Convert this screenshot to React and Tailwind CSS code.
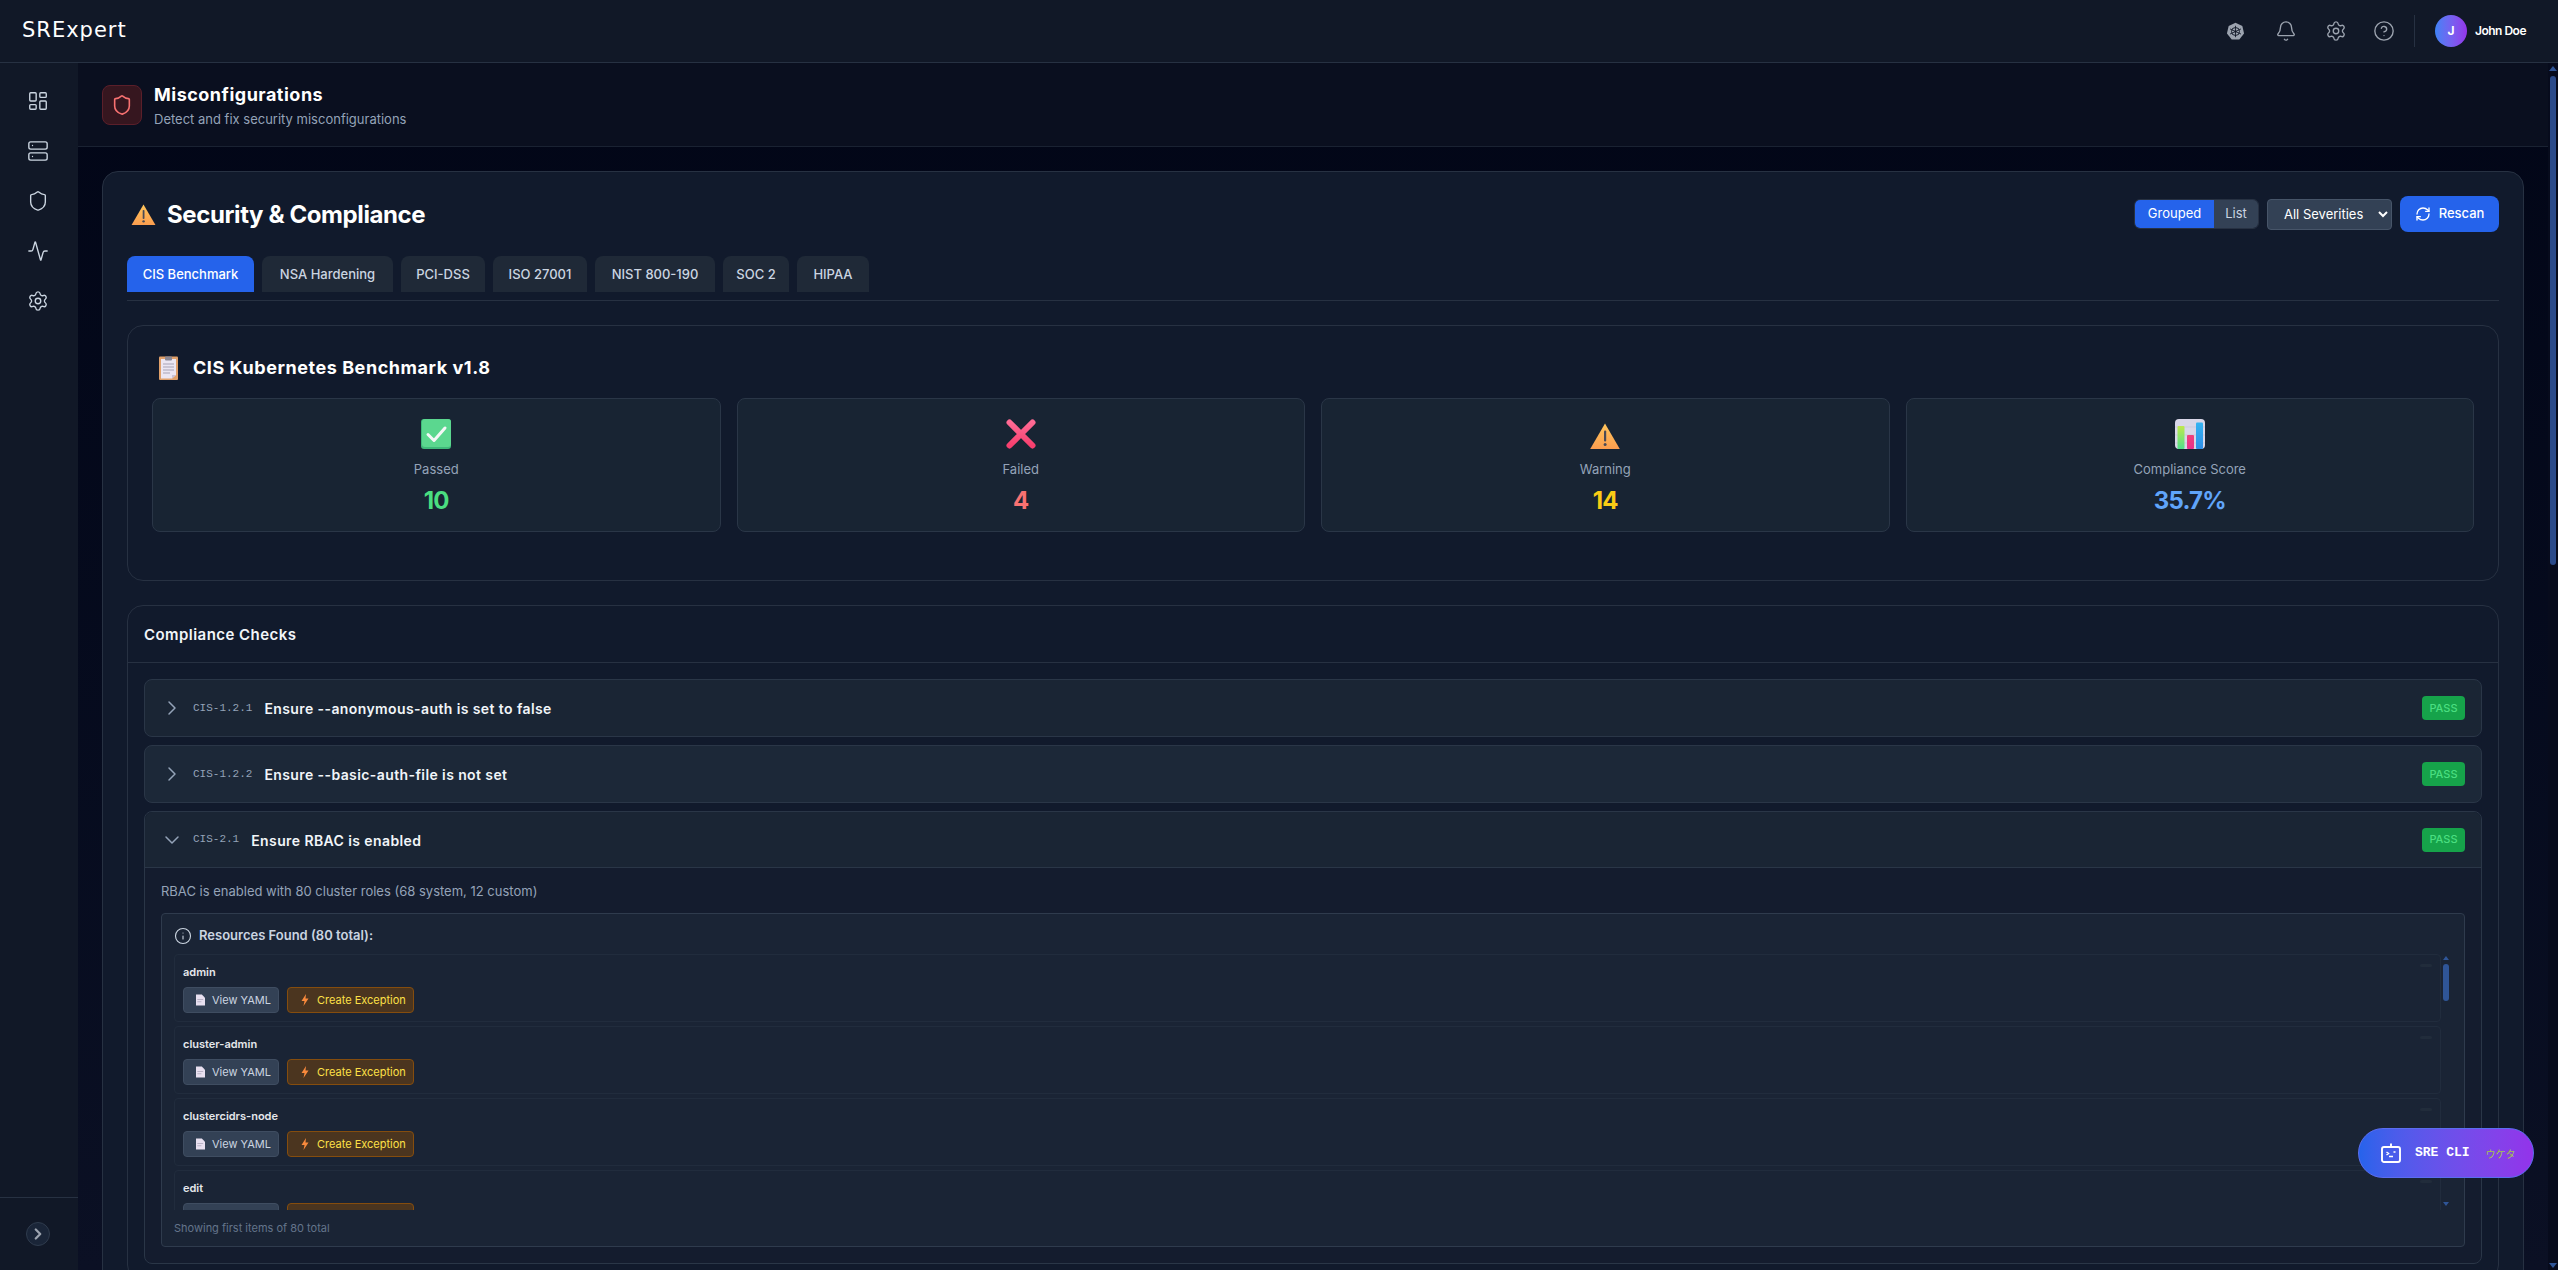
import React from "react";
import { LayoutDashboard, Server, Shield, Activity, Settings, Bell, CircleHelp, ChevronRight, ChevronDown, Info, RefreshCw } from "lucide-react";

const F = "font-['Inter',sans-serif]";

function WarnEmoji({ className, id }) {
  return (
    <svg viewBox="0 0 30 26" className={className}>
      <defs>
        <linearGradient id={id} x1="0" y1="0" x2="0" y2="1"><stop offset="0" stopColor="#ffc65c" /><stop offset="1" stopColor="#fb9d4f" /></linearGradient>
      </defs>
      <path d="M15 0.5 L29.8 26 H0.2 Z" fill={`url(#${id})`} />
      <rect x="14" y="7.5" width="2.2" height="11" rx="1" fill="#4a4a55" />
      <circle cx="15.1" cy="21.5" r="1.5" fill="#4a4a55" />
    </svg>
  );
}

function CheckEmoji({ className }) {
  return (
    <svg viewBox="0 0 30 30" className={className}>
      <rect x="0" y="0" width="30" height="30" rx="3" fill="#3fb97a" />
      <rect x="1" y="0" width="29" height="28" rx="3" fill="#5bd78f" />
      <path d="M7 15.5 L13 21.5 L24 9" fill="none" stroke="#f5f7f7" strokeWidth="3" strokeLinecap="round" strokeLinejoin="round" />
    </svg>
  );
}

function CrossEmoji({ className }) {
  return (
    <svg viewBox="0 0 30 30" className={className}>
      <defs>
        <linearGradient id="cr" x1="0" y1="0" x2="0" y2="1"><stop offset="0" stopColor="#ff6a94" /><stop offset="1" stopColor="#f73f6e" /></linearGradient>
      </defs>
      <path d="M3.5 3.5 L15 15 L26.5 3.5 L15 15 L26.5 26.5 L15 15 L3.5 26.5" stroke="url(#cr)" strokeWidth="6" strokeLinecap="round" strokeLinejoin="round" fill="none" />
    </svg>
  );
}

function ChartEmoji({ className }) {
  return (
    <svg viewBox="0 0 30 30" className={className}>
      <defs>
        <linearGradient id="cg" x1="0" y1="0" x2="0" y2="1"><stop offset="0" stopColor="#c0e84c" /><stop offset="1" stopColor="#4fe08c" /></linearGradient>
        <linearGradient id="cp" x1="0" y1="0" x2="0" y2="1"><stop offset="0" stopColor="#f0407a" /><stop offset="1" stopColor="#e8308c" /></linearGradient>
        <linearGradient id="cb" x1="0" y1="0" x2="0" y2="1"><stop offset="0" stopColor="#35b4f2" /><stop offset="1" stopColor="#2f8ee8" /></linearGradient>
      </defs>
      <rect x="0" y="0" width="30" height="30" rx="4" fill="#d9d7e8" />
      <path d="M0 8 H30 M0 16 H30 M0 24 H30" stroke="#c6c4d8" strokeWidth="0.7" />
      <rect x="2.5" y="7" width="7" height="23" rx="1" fill="url(#cg)" />
      <rect x="12" y="16" width="7" height="14" rx="1" fill="url(#cp)" />
      <rect x="21" y="3.5" width="7" height="26.5" rx="1" fill="url(#cb)" />
    </svg>
  );
}

function ClipboardEmoji({ className }) {
  return (
    <svg viewBox="0 0 19 24" className={className}>
      <rect x="0" y="0.5" width="19" height="23.5" rx="1" fill="#e0a06a" />
      <path d="M2 3 H17 V19 L13 22.5 H2 Z" fill="#ebe6f2" />
      <path d="M13 22.5 L17 19 H13 Z" fill="#c9c2d6" />
      <rect x="6" y="0.5" width="7" height="4" rx="1" fill="#8a8793" />
      <path d="M4 8 H15 M4 11 H15 M4 14 H15 M4 17 H11" stroke="#a8a3b5" strokeWidth="1" />
    </svg>
  );
}

function DocEmoji() {
  return (
    <svg viewBox="0 0 10 12" className="w-[9px] h-[12px] shrink-0">
      <path d="M0 0 H6.5 L10 3.5 V12 H0 Z" fill="#e8e0f0" />
      <path d="M1.5 5.5 H8 M1.5 8 H6" stroke="#b9b2c6" strokeWidth="1.2" />
    </svg>
  );
}

function BoltEmoji() {
  return (
    <svg viewBox="0 0 8 12" className="w-[8px] h-[12px] shrink-0">
      <path d="M5 0 L0.5 7 H3.5 L2.5 12 L7.5 4.6 H4.5 Z" fill="#f98a3c" />
    </svg>
  );
}

function K8sIcon() {
  return (
    <svg viewBox="0 0 20 20" className="w-[19px] h-[19px]">
      <path d="M10 0.8 L17.2 4.2 L19 12 L14 18.4 H6 L1 12 L2.8 4.2 Z" fill="#9ca3af" />
      <circle cx="10" cy="10" r="4.2" fill="none" stroke="#111827" strokeWidth="1" />
      <path d="M10 4 V16 M4.2 7.3 L15.8 12.7 M15.8 7.3 L4.2 12.7" stroke="#111827" strokeWidth="0.9" />
      <circle cx="10" cy="10" r="1.1" fill="#111827" />
    </svg>
  );
}

function BotIcon() {
  return (
    <svg viewBox="0 0 20 20" className="w-[20px] h-[20px]" fill="none" stroke="#fff">
      <rect x="1" y="4" width="18" height="15" rx="2" strokeWidth="1.9" />
      <path d="M10 0.5 V4" strokeWidth="1.9" />
      <path d="M5.5 9 L7.5 10.5 L5.5 12 M8 13.5 H12 M12.5 9 H14.5" strokeWidth="1.5" />
    </svg>
  );
}

function ResourceItem({ name }) {
  return (
    <div className="relative shrink-0 h-[68px] rounded border border-[#212c3d] bg-[#1a2435] pl-2 pt-[9px]">
      <div className="text-[11px] leading-[16px] font-semibold text-[#e5e7eb]">{name}</div>
      <div className="mt-[7px] flex gap-2">
        <div className="flex items-center gap-[7px] w-[96px] h-[26px] pl-[12px] rounded border border-[#3f4d61] bg-[#334155] text-[11px] text-[#cbd5e1]">
          <DocEmoji />
          View YAML
        </div>
        <div className="flex items-center gap-[8px] w-[127px] h-[26px] pl-[13px] rounded border border-[#854d0e] bg-[#4b351f] text-[11px] text-[#fde047]">
          <BoltEmoji />
          Create Exception
        </div>
      </div>
      <div className="absolute right-[8px] top-[9px] w-[12px] h-[3px] rounded-sm bg-[#212c3b]" />
    </div>
  );
}

function Stat({ icon, label, value, color }) {
  return (
    <div className="h-[134px] rounded-lg border border-[#2a3647] bg-[#182433] flex flex-col items-center pt-[20px]">
      <div className="h-[30px] flex items-end justify-center">{icon}</div>
      <div className="mt-[11px] text-[13px] leading-[18px] text-[#94a3b8]">{label}</div>
      <div className={`mt-[7px] text-2xl leading-[32px] font-bold tracking-[-0.8px] ${color}`}>{value}</div>
    </div>
  );
}

function Check({ id, title, expanded }) {
  return (
    <div className={`flex items-center h-[56px] pl-[18px] pr-[16px] ${expanded ? "border-b border-[#2a3647]" : ""}`}>
      <div className="w-[18px] shrink-0 flex justify-center">
        {expanded ? <ChevronDown size={24} strokeWidth={1.5} className="shrink-0 text-[#94a3b8]" /> : <ChevronRight size={24} strokeWidth={1.5} className="shrink-0 text-[#94a3b8]" />}
      </div>
      <span className="ml-[12px] font-['Liberation_Mono',monospace] text-[11px] text-[#94a3b8]">{id}</span>
      <span className="ml-[12px] pt-[2px] text-sm font-semibold tracking-[0.4px] text-[#f1f5f9]">{title}</span>
      <span className="ml-auto w-[43px] h-[24px] flex items-center justify-center rounded bg-[#16a34a] text-[11px] font-medium text-[#4ade80]">PASS</span>
    </div>
  );
}

const tabs = [
  { t: "NSA Hardening", w: "w-[131px]" },
  { t: "PCI-DSS", w: "w-[84px]" },
  { t: "ISO 27001", w: "w-[94px]" },
  { t: "NIST 800-190", w: "w-[120px]" },
  { t: "SOC 2", w: "w-[66px]" },
  { t: "HIPAA", w: "w-[72px]" },
];

export default function App() {
  return (
    <div className={`${F} h-screen w-full overflow-hidden flex flex-col bg-[#111827] text-white relative`}>
      <header className="shrink-0 h-[63px] border-b border-[#273142] bg-[#111827] flex items-center pl-[22px] pr-[32px]">
        <span className="font-['DejaVu_Sans',sans-serif] text-[21px] tracking-[1px] text-white">SRExpert</span>
        <div className="ml-auto flex items-center">
          <div className="w-[19px] flex justify-center"><K8sIcon /></div>
          <Bell size={22} strokeWidth={1.5} className="ml-[30px] text-[#9ca3af]" />
          <Settings size={22} strokeWidth={1.5} className="ml-[28px] text-[#9ca3af]" />
          <CircleHelp size={22} strokeWidth={1.5} className="ml-[26px] text-[#9ca3af]" />
          <div className="ml-[19px] w-px h-[32px] bg-[#273142]" />
          <div className="ml-[20px] w-[32px] h-[32px] rounded-full bg-gradient-to-r from-[#3b82f6] to-[#9333ea] flex items-center justify-center text-xs font-bold">J</div>
          <span className="ml-[8px] text-[12px] font-semibold tracking-[-0.5px] whitespace-nowrap">John Doe</span>
        </div>
      </header>

      <div className="flex-1 min-h-0 flex">
        <aside className="shrink-0 w-[78px] bg-[#111827] flex flex-col">
          <nav className="flex flex-col items-center gap-[28px] pt-[27px] pr-[2px] text-[#cbd5e1]">
            <LayoutDashboard size={22} strokeWidth={1.5} />
            <Server size={22} strokeWidth={1.5} />
            <Shield size={22} strokeWidth={1.5} />
            <Activity size={22} strokeWidth={1.5} />
            <Settings size={22} strokeWidth={1.5} />
          </nav>
          <div className="mt-auto h-[73px] border-t border-[#273142] flex items-center justify-center pr-[2px]">
            <div className="w-[24px] h-[24px] rounded-full border border-[#2f3b4d] bg-[#1a2538] flex items-center justify-center">
              <ChevronRight size={18} strokeWidth={3} className="text-[#9ca3af]" />
            </div>
          </div>
        </aside>

        <main className="flex-1 min-w-0 overflow-hidden bg-gradient-to-b from-[#020617] to-[#0b1024]">
          <div className="h-[84px] bg-[#0a0f1f] border-b border-[#1a2232] flex items-center pl-[24px]">
            <div className="w-[40px] h-[40px] rounded-lg border border-[#5b1f2a] bg-[#36161f] flex items-center justify-center">
              <Shield size={22} strokeWidth={1.75} className="text-[#f87171]" />
            </div>
            <div className="ml-[12px] pt-[2px]">
              <div className="text-lg leading-[22px] font-bold tracking-[0.5px] text-white">Misconfigurations</div>
              <div className="mt-[5px] text-[13px] leading-[16px] text-[#94a3b8]">Detect and fix security misconfigurations</div>
            </div>
          </div>

          <div className="p-6">
            <div className="rounded-2xl border border-[#273142] bg-[#111a2c] p-6">
              <div className="flex items-center h-[36px]">
                <WarnEmoji id="w1" className="ml-[4px] w-[25px] h-[21px]" />
                <h1 className="ml-[11px] pt-[1px] text-2xl font-bold tracking-[-0.4px] text-white">Security &amp; Compliance</h1>
                <div className="ml-auto flex items-center">
                  <div className="flex h-[30px] rounded-md border border-[#273142] overflow-hidden text-xs">
                    <div className="w-[79px] bg-[#2563eb] flex items-center justify-center text-[13px]">Grouped</div>
                    <div className="w-[44px] bg-[#334155] flex items-center justify-center text-[13px] text-[#cbd5e1]">List</div>
                  </div>
                  <select className="ml-2 w-[125px] h-[31px] rounded border border-[#475569] bg-[#334155] pl-[12px] text-[13px] text-white">
                    <option>All Severities</option>
                  </select>
                  <div className="ml-2 w-[99px] h-[36px] rounded-lg bg-[#2563eb] flex items-center justify-center gap-[8px] text-[13px] font-medium">
                    <RefreshCw size={16} />
                    Rescan
                  </div>
                </div>
              </div>

              <div className="mt-[24px] pb-[8px] border-b border-[#273142] flex gap-2">
                <div className="h-[36px] w-[127px] pt-[1px] rounded-t-lg bg-[#2563eb] flex items-center justify-center text-[13px] font-medium text-white">CIS Benchmark</div>
                {tabs.map(({ t, w }) => (
                  <div key={t} className={`h-[36px] ${w} pt-[1px] rounded-t-lg bg-[#1f2937] flex items-center justify-center text-[13px] font-medium text-[#cbd5e1]`}>{t}</div>
                ))}
              </div>

              <section className="mt-[24px] h-[256px] rounded-2xl border border-[#273142] bg-[#111a2c] px-6 pt-[24px]">
                <div className="flex items-center h-[36px]">
                  <ClipboardEmoji className="ml-[7px] w-[19px] h-[24px]" />
                  <h2 className="ml-[15px] text-lg font-bold tracking-[0.55px] text-white">CIS Kubernetes Benchmark v1.8</h2>
                </div>
                <div className="mt-[12px] grid grid-cols-4 gap-4">
                  <Stat icon={<CheckEmoji className="w-[30px] h-[30px]" />} label="Passed" value="10" color="text-[#4ade80]" />
                  <Stat icon={<CrossEmoji className="w-[30px] h-[30px]" />} label="Failed" value="4" color="text-[#f87171]" />
                  <Stat icon={<WarnEmoji id="w2" className="w-[30px] h-[26px]" />} label="Warning" value="14" color="text-[#facc15]" />
                  <Stat icon={<ChartEmoji className="w-[30px] h-[30px]" />} label="Compliance Score" value="35.7%" color="text-[#60a5fa]" />
                </div>
              </section>

              <section className="mt-[24px] rounded-2xl border border-[#273142] bg-[#111a2c]">
                <div className="h-[57px] pt-[2px] border-b border-[#273142] flex items-center pl-[16px] text-[15px] font-semibold tracking-[0.45px] text-[#f1f5f9]">Compliance Checks</div>
                <div className="p-[16px] flex flex-col gap-2">
                  <div className="rounded-lg border border-[#2a3647] bg-[#1a2534]"><Check id="CIS-1.2.1" title="Ensure --anonymous-auth is set to false" /></div>
                  <div className="rounded-lg border border-[#2a3647] bg-[#1c2838]"><Check id="CIS-1.2.2" title="Ensure --basic-auth-file is not set" /></div>
                  <div className="rounded-lg border border-[#2a3647] bg-[#141c2e]">
                    <div className="bg-[#1a2534] rounded-t-lg"><Check id="CIS-2.1" title="Ensure RBAC is enabled" expanded /></div>
                    <div className="px-[16px] pb-[16px]">
                      <div className="pt-[14px] text-[13px] leading-[18px] text-[#94a3b8]">RBAC is enabled with 80 cluster roles (68 system, 12 custom)</div>
                      <div className="mt-[13px] rounded border border-[#2f3b4d] bg-[#1a2435]">
                        <div className="h-[40px] pt-[4px] flex items-center pl-[12px] text-[13px] font-semibold text-[#cbd5e1]">
                          <Info size={18} strokeWidth={1.5} className="text-[#cbd5e1]" />
                          <span className="ml-[7px]">Resources Found (80 total):</span>
                        </div>
                        <div className="flex h-[256px] pl-[12px] pr-[14px]">
                          <div className="flex-1 min-w-0 overflow-hidden flex flex-col gap-[4px]">
                            <ResourceItem name="admin" />
                            <ResourceItem name="cluster-admin" />
                            <ResourceItem name="clustercidrs-node" />
                            <ResourceItem name="edit" />
                          </div>
                          <div className="shrink-0 w-[8px] ml-[1px] flex flex-col items-center">
                            <div className="mt-[2px] w-0 h-0 border-x-[3px] border-x-transparent border-b-[4px] border-b-[#2f5597]" />
                            <div className="mt-[4px] w-[6px] h-[37px] rounded-sm bg-[#2f5597]" />
                            <div className="mt-auto mb-[4px] w-0 h-0 border-x-[3px] border-x-transparent border-t-[4px] border-t-[#2f5597]" />
                          </div>
                        </div>
                        <div className="h-[36px] flex items-center pl-[12px] text-[11px] text-[#64748b]">Showing first items of 80 total</div>
                      </div>
                    </div>
                  </div>
                </div>
              </section>
            </div>
          </div>
        </main>

        <div className="shrink-0 w-[10px] bg-[#070b1c] flex flex-col items-center">
          <div className="mt-[3px] w-0 h-0 border-x-[4px] border-x-transparent border-b-[5px] border-b-[#2f5597]" />
          <div className="mt-[5px] w-[6px] h-[489px] rounded-sm bg-[#2a4a8a]" />
          <div className="mt-auto mb-[2px] w-0 h-0 border-x-[4px] border-x-transparent border-t-[5px] border-t-[#2f5597]" />
        </div>
      </div>

      <div className="absolute right-[24px] bottom-[92px] w-[176px] h-[50px] rounded-full border border-[#5b6df0] bg-gradient-to-r from-[#2563eb] to-[#9333ea] flex items-center pl-[22px]">
        <BotIcon />
        <span className="ml-[14px] font-['Liberation_Mono',monospace] text-[13px] font-bold text-white">SRE CLI</span>
        <span className="ml-[16px] font-['Noto_Sans_CJK_JP',sans-serif] text-[10px] text-[#a6c44a]">ウケタ</span>
      </div>
    </div>
  );
}
